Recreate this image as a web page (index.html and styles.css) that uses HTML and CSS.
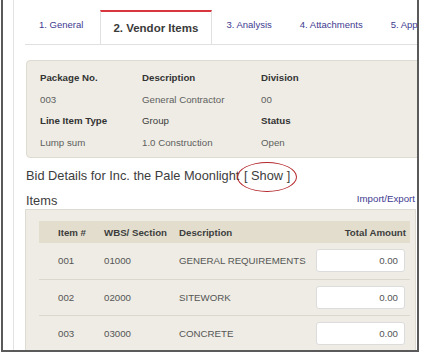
FILE: index.html
```html
<!DOCTYPE html>
<html lang="en">
<head>
    <meta charset="UTF-8">
    <title>Vendor Items</title>
    <link rel="stylesheet" href="styles.css">
</head>
<body>

<div class="frame">
    <div class="page">
        <div class="content">
            <ul class="tabs">
                <li class="tab">1. General</li>
                <li class="tab tab-active">2. Vendor Items</li>
                <li class="tab">3. Analysis</li>
                <li class="tab">4. Attachments</li>
                <li class="tab">5. App</li>
            </ul>

            <div class="info-panel">
                <div class="info-label">Package No.</div>
                <div class="info-label">Description</div>
                <div class="info-label">Division</div>
                <div class="info-value">003</div>
                <div class="info-value">General Contractor</div>
                <div class="info-value">00</div>
                <div class="info-label">Line Item Type</div>
                <div class="info-label info-plain">Group</div>
                <div class="info-label">Status</div>
                <div class="info-value">Lump sum</div>
                <div class="info-value">1.0 Construction</div>
                <div class="info-value">Open</div>
            </div>

            <h2 class="bid-title">Bid Details for Inc. the Pale Moonlight <span class="show-link">[ Show ]<span class="circle"></span></span></h2>

            <div class="items-head">
                <h3 class="items-title">Items</h3>
                <a class="import-link">Import/Export</a>
            </div>

            <div class="items-panel">
                <div class="items-row items-header">
                    <div class="col-num">Item #</div>
                    <div>WBS/ Section</div>
                    <div>Description</div>
                    <div class="col-amount">Total Amount</div>
                </div>
                <div class="items-row">
                    <div class="col-num">001</div>
                    <div>01000</div>
                    <div>GENERAL REQUIREMENTS</div>
                    <div><input class="amount-input" type="text" value="0.00"></div>
                </div>
                <div class="items-row">
                    <div class="col-num">002</div>
                    <div>02000</div>
                    <div>SITEWORK</div>
                    <div><input class="amount-input" type="text" value="0.00"></div>
                </div>
                <div class="items-row">
                    <div class="col-num">003</div>
                    <div>03000</div>
                    <div>CONCRETE</div>
                    <div><input class="amount-input" type="text" value="0.00"></div>
                </div>
            </div>
        </div>
    </div>
</div>

</body>
</html>
```

FILE: styles.css
```css
body {
    margin: 0;
    font-family: 'Liberation Sans', Arial, sans-serif;
    background-color: white;
}
.frame {
    margin-left: 1px;
    width: 418px;
    height: 352px;
    box-sizing: border-box;
    border: 2px solid #5a5a5a;
    border-top: none;
    overflow: hidden;
}
.page {
    margin-left: 10px;
    height: 100%;
    border-left: 1px solid #e2e2e2;
    padding-left: 12px;
    padding-top: 10px;
    box-sizing: border-box;
}
.content {
    width: 390px;
}
.tabs {
    list-style: none;
    margin: 0 0 0 -1px;
    padding: 0;
    display: flex;
    height: 34px;
    width: 420px;
    border-bottom: 1px solid #e0e0e0;
    white-space: nowrap;
}
.tab {
    padding: 8px 14px 0 14px;
    line-height: 14px;
    font-size: 9.5px;
    color: #3d3a8f;
}
.tab-active {
    margin-left: 3px;
    padding: 0 13px 0 12px;
    height: 34px;
    line-height: 32px;
    box-sizing: border-box;
    border-top: 2px solid #d9363e;
    border-left: 1px solid #e0e0e0;
    border-right: 1px solid #e0e0e0;
    background-color: white;
    font-size: 11.5px;
    font-weight: bold;
    color: #3a3a3a;
}
.info-panel {
    margin-top: 15px;
    width: 420px;
    background-color: #eeece4;
    border: 1px solid #dedbd2;
    border-radius: 4px;
    padding: 6px 0 4px 13px;
    display: grid;
    grid-template-columns: 102px 119px 1fr;
    grid-auto-rows: 21.5px;
    align-items: center;
    font-size: 9.7px;
}
.info-label {
    font-weight: bold;
    color: #333;
}
.info-plain {
    font-weight: normal;
    color: #3a3a3a;
}
.info-value {
    color: #5e5e5e;
}
.bid-title {
    margin: 9px 0 0 0;
    font-size: 12.8px;
    line-height: 18px;
    font-weight: normal;
    color: #3d3d3d;
}
.show-link {
    position: relative;
    margin-left: 1px;
}
.circle {
    position: absolute;
    left: -7px;
    top: -6px;
    width: 60px;
    height: 30px;
    box-sizing: border-box;
    border: 1.5px solid #b3262b;
    border-radius: 50%;
}
.items-head {
    margin-top: 8px;
    height: 16px;
    display: flex;
    justify-content: space-between;
    align-items: flex-start;
}
.items-title {
    margin: 0;
    font-size: 12.8px;
    line-height: 16px;
    font-weight: normal;
    color: #3d3d3d;
}
.import-link {
    font-size: 9.7px;
    line-height: 12px;
    color: #3d3a8f;
    margin-right: 1px;
}
.items-panel {
    margin-left: -1px;
    background-color: #eeece4;
    border: 1px solid #dedbd2;
    border-bottom: none;
    padding: 11px 5px 0 13px;
}
.items-row {
    display: grid;
    grid-template-columns: 65px 75px 137px 1fr;
    align-items: center;
    height: 36.5px;
    box-sizing: border-box;
    border-bottom: 1px solid #dcd8cd;
    font-size: 9.7px;
    color: #555;
}
.items-header {
    height: 22px;
    border-bottom: none;
    background-color: #e2ddcd;
    font-weight: bold;
    color: #3d3d3d;
}
.col-num {
    padding-left: 19px;
}
.col-amount {
    text-align: right;
    padding-right: 4px;
}
.amount-input {
    display: block;
    width: 89px;
    height: 23px;
    box-sizing: border-box;
    border: 1px solid #dcdcdc;
    border-radius: 3px;
    background-color: white;
    text-align: right;
    padding: 0 6px;
    font-family: 'Liberation Sans', Arial, sans-serif;
    font-size: 9.7px;
    color: #555;
}
```
